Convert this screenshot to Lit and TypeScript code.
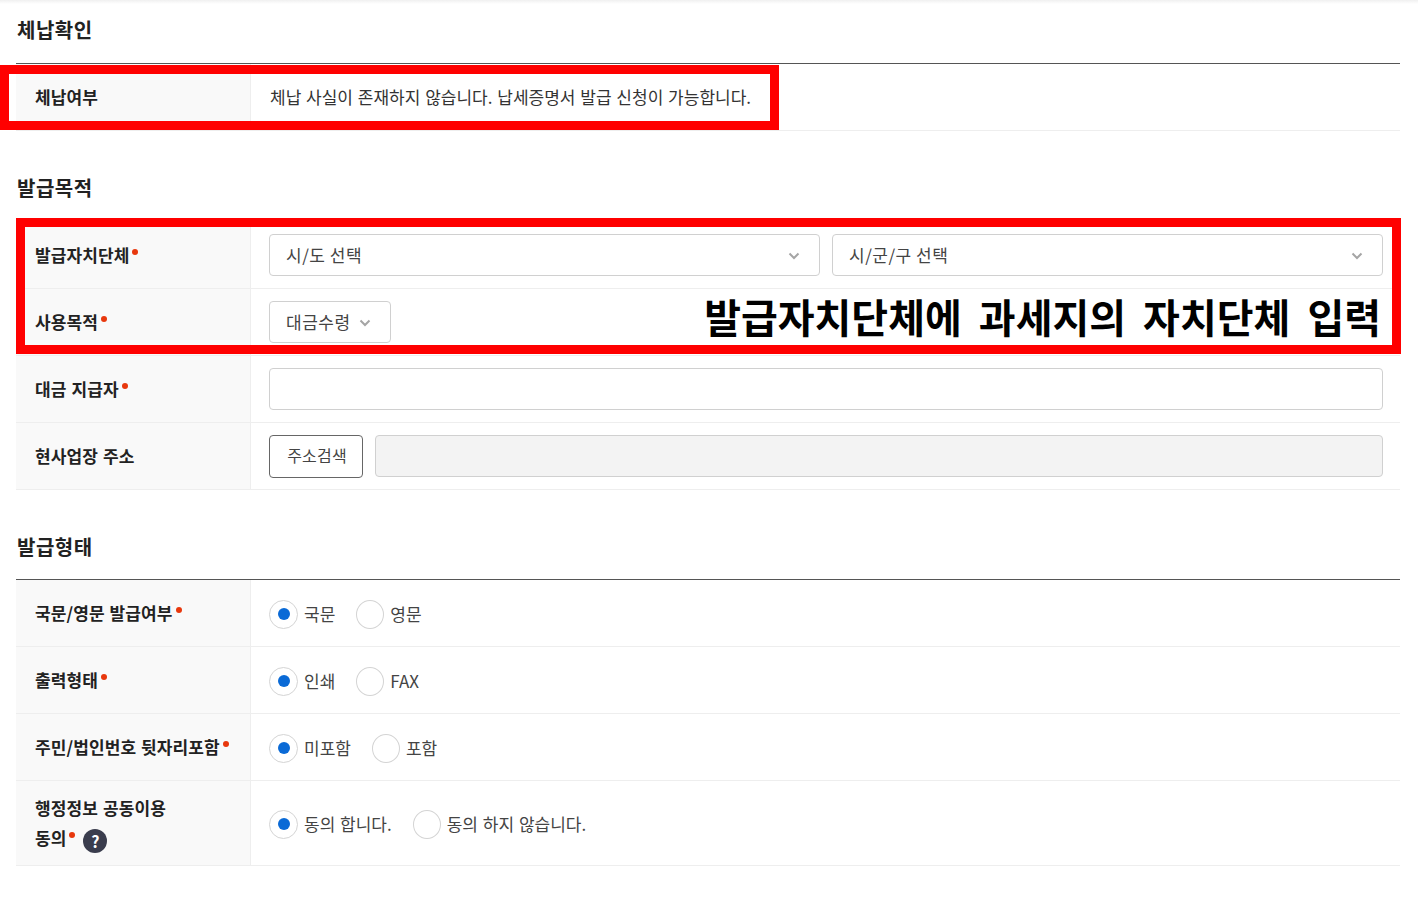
import { LitElement, html, css, svg } from "lit";
import { customElement } from "lit/decorators.js";

const chevron = svg`<svg class="chev" width="12" height="8" viewBox="0 0 12 8"><path d="M1.5 1.5 6 6l4.5-4.5" fill="none" stroke="#a5a5a5" stroke-width="2"/></svg>`;

@customElement("app-root")
export class AppRoot extends LitElement {
  static styles = css`
    :host {
      display: block;
      position: relative;
      height: 899px;
      background: #fff;
      padding: 0 18px 0 16px;
      box-sizing: border-box;
      overflow: hidden;
      font-family: "Noto Sans CJK KR", "Noto Sans", sans-serif;
      color: #333;
      font-size: 17px;
      letter-spacing: 0;
      word-spacing: 1px;
    }
    .shadow {
      position: absolute;
      left: 0;
      right: 0;
      top: 0;
      height: 4px;
      background: linear-gradient(#f0f0f0, #fff);
    }
    section + section { margin-top: 27px; }
    section.third { margin-top: 26px; }
    section.third h2 { padding-top: 13px; }
    h2 {
      margin: 0;
      height: 64px;
      box-sizing: border-box;
      padding: 12px 0 0 1px;
      font-size: 20px;
      line-height: 36px;
      font-weight: 700;
      color: #222;
      letter-spacing: 0.5px;
      border-bottom: 1px solid #555;
    }
    .row {
      display: grid;
      grid-template-columns: 235px 1fr;
      height: 67px;
      box-sizing: border-box;
      border-bottom: 1px solid #eee;
    }
    .row.tall { height: 85px; }
    .label {
      background: #f9f9f9;
      border-right: 1px solid #eee;
      display: flex;
      align-items: center;
      padding: 0 0 1px 19px;
      font-weight: 700;
      font-size: 17px;
      line-height: 30px;
      color: #222;
      letter-spacing: 0.1px;
    }
    .tall .label { padding-bottom: 0; }
    .req {
      display: inline-block;
      width: 6px;
      height: 6px;
      margin-left: 3px;
      border-radius: 50%;
      background: #e8380d;
      vertical-align: 7px;
    }
    .help {
      display: inline-flex;
      width: 24px;
      height: 24px;
      margin-left: 8px;
      border-radius: 50%;
      background: #3a3d4d;
      color: #fff;
      align-items: center;
      justify-content: center;
      font-size: 16px;
      font-weight: 700;
      vertical-align: -3px;
      letter-spacing: 0;
    }
    .cell {
      display: flex;
      align-items: center;
      gap: 12px;
      padding: 0 17px 0 18px;
      min-width: 0;
    }
    .text { padding: 0 0 2px 1px; }
    .select, .input, .btn {
      height: 42px;
      box-sizing: border-box;
      border: 1px solid #d0d0d0;
      border-radius: 4px;
      background: #fff;
      display: flex;
      align-items: center;
    }
    .select {
      flex: 1;
      padding: 0 19px 0 16px;
      justify-content: space-between;
      color: #444;
      letter-spacing: 0.5px;
      word-spacing: 0;
    }
    .select span { margin-bottom: 1px; }
    .chev { margin-top: 2px; }
    .select.small {
      flex: none;
      width: 122px;
      padding: 0 19px 0 16px;
    }
    .input { flex: 1; }
    .input.off { background: #f3f3f3; }
    .btn {
      width: 94px;
      height: 43px;
      border-color: #666;
      justify-content: center;
      color: #444;
      font-size: 16px;
      letter-spacing: 0.2px;
      padding: 0 0 2px 2px;
    }
    .radios { gap: 20px; }
    .radio {
      display: flex;
      align-items: center;
      gap: 6px;
      color: #444;
    }
    .circle {
      width: 28px;
      height: 29px;
      margin: 2px 0 0 1px;
      box-sizing: border-box;
      border: 1px solid #d4d4d4;
      border-radius: 50%;
      background: #fff;
      display: flex;
      align-items: center;
      justify-content: center;
    }
    .circle.on { width: 29px; margin-left: 0; }
    .circle.on::after {
      content: "";
      width: 12px;
      height: 12px;
      border-radius: 50%;
      background: #0a6ad6;
    }
    .mark {
      position: absolute;
      box-sizing: border-box;
      border: 9px solid #ff0000;
    }
    .mark.one { left: 0; top: 65px; width: 779px; height: 65px; }
    .mark.two { left: 16px; top: 218px; width: 1385px; height: 136px; }
    .note {
      position: absolute;
      right: 37px;
      top: 288px;
      font-size: 40px;
      line-height: 56px;
      font-weight: 700;
      color: #000;
      letter-spacing: 0;
      word-spacing: 8px;
      white-space: pre;
    }
  `;

  private radios(items: string[]) {
    return html`<div class="cell radios">
      ${items.map(
        (t, i) => html`<div class="radio"><span class="circle ${i === 0 ? "on" : ""}"></span>${t}</div>`
      )}
    </div>`;
  }

  private label(t: string, req = true) {
    return html`<div class="label"><span>${t}${req ? html`<i class="req"></i>` : ""}</span></div>`;
  }

  render() {
    return html`
      <div class="shadow"></div>
      <section>
        <h2>체납확인</h2>
        <div class="row">
          ${this.label("체납여부", false)}
          <div class="cell"><span class="text">체납 사실이 존재하지 않습니다. 납세증명서 발급 신청이 가능합니다.</span></div>
        </div>
      </section>
      <section>
        <h2>발급목적</h2>
        <div class="row">
          ${this.label("발급자치단체")}
          <div class="cell">
            <div class="select"><span>시/도 선택</span>${chevron}</div>
            <div class="select"><span>시/군/구 선택</span>${chevron}</div>
          </div>
        </div>
        <div class="row">
          ${this.label("사용목적")}
          <div class="cell"><div class="select small"><span>대금수령</span>${chevron}</div></div>
        </div>
        <div class="row">
          ${this.label("대금 지급자")}
          <div class="cell"><div class="input"></div></div>
        </div>
        <div class="row">
          ${this.label("현사업장 주소", false)}
          <div class="cell"><div class="btn">주소검색</div><div class="input off"></div></div>
        </div>
      </section>
      <section class="third">
        <h2>발급형태</h2>
        <div class="row">${this.label("국문/영문 발급여부")}${this.radios(["국문", "영문"])}</div>
        <div class="row">${this.label("출력형태")}${this.radios(["인쇄", "FAX"])}</div>
        <div class="row">${this.label("주민/법인번호 뒷자리포함")}${this.radios(["미포함", "포함"])}</div>
        <div class="row tall">
          <div class="label"><span>행정정보 공동이용<br />동의<i class="req"></i><span class="help">?</span></span></div>
          ${this.radios(["동의 합니다.", "동의 하지 않습니다."])}
        </div>
      </section>
      <div class="mark one"></div>
      <div class="mark two"></div>
      <div class="note">발급자치단체에 과세지의 자치단체 입력</div>
    `;
  }
}
